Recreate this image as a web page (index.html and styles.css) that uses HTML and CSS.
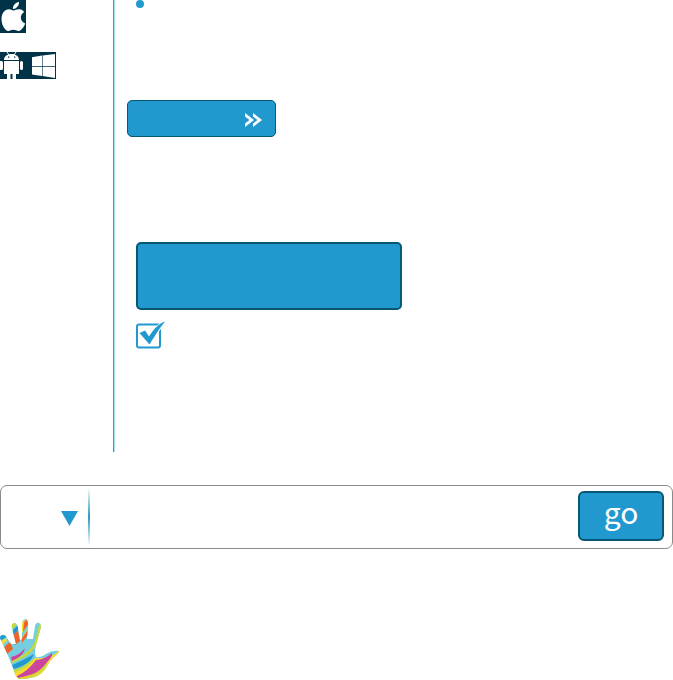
FILE: index.html
```html
<!DOCTYPE html>
<html lang="en">
<head>
<meta charset="utf-8">
<title>Downloads</title>
<link rel="stylesheet" href="styles.css">
</head>
<body>
<div class="columns">
  <aside class="platforms">
    <a class="platform" href="#" aria-label="Apple">
      <svg width="26" height="33" viewBox="0 0 26 33">
        <path fill="#003348" d="M0 0h26v33H0z"/>
        <path fill="#fff" d="M19 2c.4 3.500-2.700 7-6 7C12.500 5.500 15.500 2.500 19 2zM13.300 10.500c2-.2 3.500-1.500 6-1.300 2.200.2 3.800 1.200 4.900 2.800-5 3.200-4.200 9.500 1 11.500-1.200 3.300-3.800 7-6.200 7.500-2.200.2-3.300-1.200-5.500-1.200S10 31 8.200 31C4.800 30.800 1.500 24.500 1.500 19c0-6 3.500-9.700 7.300-9.800 1.800 0 3.300 1.200 4.500 1.300z"/>
      </svg>
    </a>
    <a class="platform" href="#" aria-label="Android and Windows">
      <svg width="56" height="27" viewBox="0 0 56 27">
        <path fill="#003348" d="M0 0h56v27H0z"/>
        <path fill="none" stroke="#fff" d="M7 0l2 3M16 0l-2 3"/>
        <path fill="#fff" d="M4 8c0-3.500 3-6 7.500-6S19 4.500 19 8zM4 9h15v13h-3v5h-3.500v-5h-2v5H7v-5H4zM0 9h1.500q1.500 0 1.500 1.500v6q0 1.500-1.500 1.500H0zM21.500 9q1.500 0 1.500 1.500v6q0 1.500-1.500 1.500T20 16.500v-6Q20 9 21.500 9z"/>
        <path fill="#003348" d="M8 4.500h1.300v1.300H8zM14 4.500h1.300v1.300H14z"/>
        <path fill="#fff" d="M32 5.200l10-1.600V14H32zM42.600 3.500L55 2v12H42.600zM32 14.700h10v9.300l-10-1.500zM42.600 14.700H55V26l-12.400-2z"/>
      </svg>
    </a>
  </aside>
  <main class="content">
    <ul class="list"><li class="dot"></li></ul>
    <button class="more" type="button" aria-label="More">
      <svg width="18" height="14" viewBox="0 0 18 14" fill="#fff">
        <path d="M1 0l9 7-9 7v-3.500L5.500 7 1 3.500zM9 0l9 7-9 7v-3.500L13.500 7 9 3.500z"/>
      </svg>
    </button>
    <button class="download" type="button" aria-label="Download"></button>
    <label class="check">
      <input type="checkbox" checked aria-label="Include">
      <svg width="30" height="28" viewBox="0 0 30 28">
        <rect x="1" y="3.500" width="23" height="23" rx="2" fill="none" stroke="#2199cf" stroke-width="2"/>
        <path d="M3.500 12L9 9.500l4 6C18 8 22 3 29 .5 24 7 20 13 13.500 23.500z" fill="#2199cf" stroke="#fff" stroke-width="2" paint-order="stroke"/>
      </svg>
    </label>
  </main>
</div>
<form class="search">
  <div class="scope">
    <select aria-label="Category"><option></option></select>
    <svg class="arrow" width="17" height="15" viewBox="0 0 17 15"><path fill="#2199cf" d="M0 0h17L8.500 15z"/></svg>
  </div>
  <span class="divider"></span>
  <input class="query" type="text" aria-label="Search">
  <button class="go" type="submit">go</button>
</form>
<footer class="footer">
  <a href="#" aria-label="Home">
    <svg width="60" height="62" viewBox="0 0 60 62">
      <clipPath id="hand"><path d="M0 20Q0 17 3 17 6 17 7 20L11 26 16 26 12 10Q11 6 14 5 17 5 18 10L20 22 22 21 22 5Q23 1 26 1 28 2 28 7L27 21 33 21 35 8Q36 4 39 5 41 6 41 9L36 27Q34 34 36 39 40 40 46 36 52 32 59 33 60 34 55 38 50 42 47 48 43 56 35 59 27 61 19 61 15 58 14 53L9 40 5 31z"/></clipPath>
      <g clip-path="url(#hand)">
        <path fill="#74cedf" d="M0 0h60v62H0z"/>
        <path fill="#2199cf" d="M0 15h8l-3 5-5 3zM12 13l6-6v5l-5 6z"/>
        <path fill="#f6dc2d" d="M0 24l6-4 1 3-5 4zM22 4l7-4v12l-7 8z"/>
        <path fill="#ed6428" d="M4 29l6-5 3 7-6 5zM12 19l6-7 2 11-5 4zM24 4l5-4v6l-6 8zM22 20l6-8v5l-6 8z"/>
        <path fill="#74cedf" d="M22 15l6-8v4l-6 8z"/>
        <path fill="#c7d936" d="M11 6l5-3 2 3-6 5z"/>
        <path fill="none" stroke="#c7d936" stroke-width="2.500" d="M41 5L36 24Q33 32 24 38L12 44"/>
        <path fill="#cc449b" d="M11 39Q20 37 25 30 24 38 12 43z"/>
        <path fill="#2199cf" d="M12 47Q22 43 34 36 31 46 14 51z"/>
        <path fill="#f6dc2d" d="M14 54Q27 51 35 40 49 42 60 32v30H14z"/>
        <path fill="#cc449b" d="M17 58Q28 53 36 42 44 42 52 35 53 38 48 43 41 54 30 57 23 59 18 60z"/>
        <path fill="none" stroke="#c7d936" stroke-width="2" d="M18 61Q35 61 47 46M14 53Q25 50 33 42"/>
      </g>
    </svg>
  </a>
</footer>
</body>
</html>
```

FILE: styles.css
```css
* {
  box-sizing: border-box;
}

body {
  margin: 0;
  background: #fff;
  font-family: "Noto Sans CJK SC", "Open Sans", sans-serif;
}

svg {
  display: block;
}

button {
  margin: 0;
  padding: 0;
  background: #2199cf;
  color: #fff;
  font-family: inherit;
}

.columns {
  display: flex;
}

.platforms {
  display: flex;
  flex-direction: column;
  gap: 19px;
  width: 113px;
}

.content {
  display: flex;
  flex: 1;
  flex-direction: column;
  align-items: flex-start;
  padding: 0 0 103px 21px;
  border-left: 1px solid #7084a1;
  box-shadow: inset 1px 0 #a5e3ed;
}

.list {
  margin: 0;
  padding: 0 0 0 1px;
  list-style: none;
}

.dot {
  width: 8px;
  height: 8px;
  border-radius: 50%;
  background: #2199cf;
}

.more {
  display: flex;
  align-items: center;
  justify-content: flex-end;
  width: 149px;
  height: 37px;
  margin: 92px 0 0 -8px;
  padding: 2px 13px 0 0;
  border: 1px solid #045873;
  border-radius: 5px;
}

.download {
  width: 266px;
  height: 68px;
  margin: 105px 0 0 1px;
  border: 2px solid #045873;
  border-radius: 5px;
}

.check {
  margin: 11px 0 0 1px;
}

.check input {
  display: block;
  appearance: none;
  width: 0;
  height: 0;
  margin: 0;
}

.search {
  display: flex;
  align-items: center;
  height: 64px;
  margin-top: 33px;
  padding-right: 8px;
  border: 1px solid #8b8b8b;
  border-radius: 7px;
}

.scope {
  display: flex;
  align-items: center;
  width: 87px;
  padding-right: 10px;
}

.scope select {
  flex: 1;
  min-width: 0;
  height: 48px;
  border: 0;
  background: none;
  appearance: none;
}

.arrow {
  margin-top: 2px;
}

.divider {
  width: 2px;
  height: 58px;
  background: linear-gradient(transparent, #2b9bbf 50%, transparent);
}

.query {
  flex: 1;
  min-width: 0;
  height: 48px;
  border: 0;
  background: none;
}

.go {
  width: 86px;
  height: 50px;
  margin-bottom: 2px;
  padding-bottom: 10px;
  border: 2px solid #045873;
  border-radius: 6px;
  font-size: 30px;
  line-height: 36px;
}

.footer {
  display: flex;
  padding-top: 69px;
}
```
